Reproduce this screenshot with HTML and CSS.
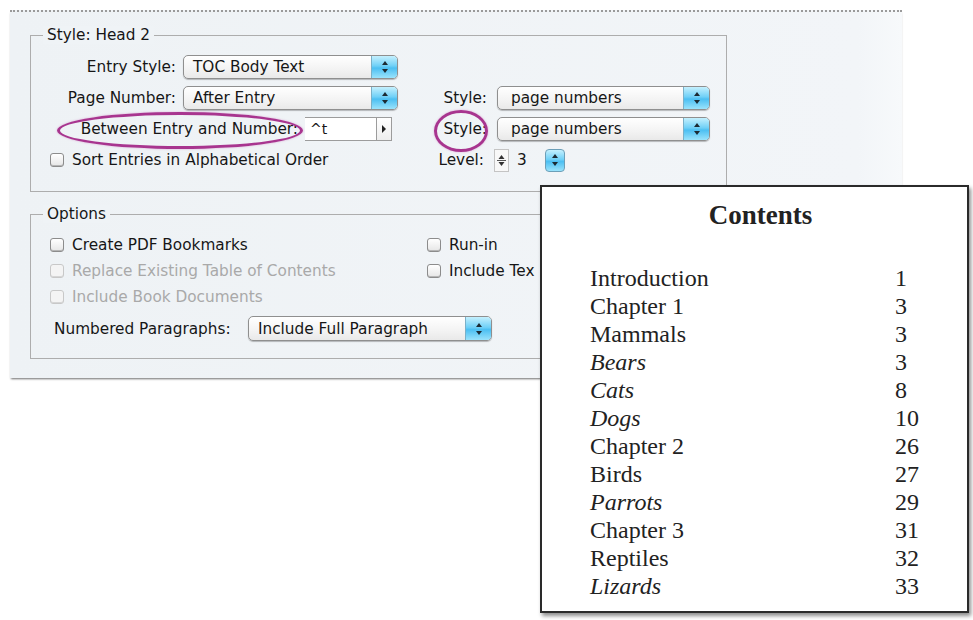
FILE: index.html
```html
<!DOCTYPE html>
<html>
<head>
<meta charset="utf-8">
<title>Table of Contents</title>
<link rel="stylesheet" href="styles.css">
</head>
<body>
<div class="page">
  <div class="dialog">
    <div class="group g1">
      <div class="legend">Style: Head 2</div>
      <div class="g1-body">
        <div class="col-left">
          <div class="row">
            <span class="lbl w145">Entry Style:</span>
            <div class="popup w215"><span class="ptxt">TOC Body Text</span><span class="stepper"><svg width="8" height="14" viewBox="0 0 8 14"><path d="M4 1 L7 5 L1 5 Z M4 13 L7 9 L1 9 Z" fill="#1c2a33"/></svg></span></div>
          </div>
          <div class="row">
            <span class="lbl w145">Page Number:</span>
            <div class="popup w215"><span class="ptxt">After Entry</span><span class="stepper"><svg width="8" height="14" viewBox="0 0 8 14"><path d="M4 1 L7 5 L1 5 Z M4 13 L7 9 L1 9 Z" fill="#1c2a33"/></svg></span></div>
          </div>
          <div class="row">
            <span class="lbl w267">Between Entry and Number:</span>
            <div class="field"><span class="ftxt">^t</span><span class="fbtn"><svg width="6" height="8" viewBox="0 0 6 8"><path d="M1 0 L5 4 L1 8 Z" fill="#222"/></svg></span></div>
          </div>
          <div class="row">
            <span class="check first"></span><span class="ctext">Sort Entries in Alphabetical Order</span>
          </div>
        </div>
        <div class="col-right">
          <div class="row">
            <span class="lbl w87">Style:</span>
            <div class="popup w213"><span class="ptxt wide">page numbers</span><span class="stepper"><svg width="8" height="14" viewBox="0 0 8 14"><path d="M4 1 L7 5 L1 5 Z M4 13 L7 9 L1 9 Z" fill="#1c2a33"/></svg></span></div>
          </div>
          <div class="row">
            <span class="lbl w87">Style:</span>
            <div class="popup w213"><span class="ptxt wide">page numbers</span><span class="stepper"><svg width="8" height="14" viewBox="0 0 8 14"><path d="M4 1 L7 5 L1 5 Z M4 13 L7 9 L1 9 Z" fill="#1c2a33"/></svg></span></div>
          </div>
          <div class="row">
            <span class="lbl w84">Level:</span>
            <span class="spin"><svg width="13" height="21" viewBox="0 0 13 21"><path d="M6.5 5 L9.5 9 L3.5 9 Z M6.5 16 L9.5 12 L3.5 12 Z" fill="#333"/><path d="M2 10.5 H11" stroke="#555" stroke-width="1"/></svg></span>
            <span class="lvl">3</span>
            <span class="bluebtn"><svg width="8" height="14" viewBox="0 0 8 14"><path d="M4 1 L7 5 L1 5 Z M4 13 L7 9 L1 9 Z" fill="#1c2a33"/></svg></span>
          </div>
        </div>
      </div>
    </div>

    <div class="group g2">
      <div class="legend">Options</div>
      <div class="opts">
        <div class="opt"><span class="check"></span><span class="ctext">Create PDF Bookmarks</span></div>
        <div class="opt clip"><span class="check"></span><span class="ctext">Run-in</span></div>
        <div class="opt dis"><span class="check"></span><span class="ctext">Replace Existing Table of Contents</span></div>
        <div class="opt clip"><span class="check"></span><span class="ctext">Include Tex</span></div>
        <div class="opt dis"><span class="check"></span><span class="ctext">Include Book Documents</span></div>
      </div>
      <div class="numrow">
        <span class="lbl w183 left">Numbered Paragraphs:</span>
        <div class="popup w244"><span class="ptxt">Include Full Paragraph</span><span class="stepper"><svg width="8" height="14" viewBox="0 0 8 14"><path d="M4 1 L7 5 L1 5 Z M4 13 L7 9 L1 9 Z" fill="#1c2a33"/></svg></span></div>
      </div>
    </div>
  </div>

  <span class="ring ring1"></span>
  <span class="ring ring2"></span>

  <div class="contents">
    <div class="ctitle">Contents</div>
    <div class="toc">
      <span>Introduction</span><span>1</span>
      <span>Chapter 1</span><span>3</span>
      <span>Mammals</span><span>3</span>
      <span class="it">Bears</span><span>3</span>
      <span class="it">Cats</span><span>8</span>
      <span class="it">Dogs</span><span>10</span>
      <span>Chapter 2</span><span>26</span>
      <span>Birds</span><span>27</span>
      <span class="it">Parrots</span><span>29</span>
      <span>Chapter 3</span><span>31</span>
      <span>Reptiles</span><span>32</span>
      <span class="it">Lizards</span><span>33</span>
    </div>
  </div>
</div>
</body>
</html>
```

FILE: styles.css
```css
* { box-sizing: border-box; }
html, body { margin: 0; padding: 0; background: #ffffff; }
.page {
  position: relative;
  width: 973px;
  height: 620px;
  padding-top: 10px;
  overflow: hidden;
  font-family: "DejaVu Sans", "Liberation Sans", sans-serif;
  font-size: 15.3px;
  color: #161616;
}
.dialog {
  margin-left: 10px;
  width: 892px;
  height: 368px;
  border-top: 2px dotted #9a9a9a;
  background: linear-gradient(90deg, #eef2f5 0%, #f2f5f8 95%, #f7f9fb 100%);
  box-shadow: 0 2px 2px -1px rgba(60,60,60,0.75);
  padding-top: 23px;
}
.group {
  margin-left: 20px;
  width: 697px;
  border: 1px solid #adadad;
}
.legend {
  width: fit-content;
  margin: -10px 0 0 12px;
  padding: 0 4px;
  line-height: 18px;
  height: 18px;
  background: #eff3f6;
}
.g1-body {
  display: flex;
  margin-top: 11px;
  padding-bottom: 19px;
}
.col-left { width: 369px; display: flex; flex-direction: column; gap: 7px; }
.col-right { display: flex; flex-direction: column; gap: 7px; margin-top: 31px; }
.row { display: flex; align-items: center; height: 24px; }
.lbl { text-align: right; white-space: nowrap; }
.lbl.left { text-align: left; }
.w145 { width: 145px; margin-right: 7px; }
.w267 { width: 267px; margin-right: 7px; }
.w87 { width: 87px; margin-right: 10px; }
.w84 { width: 84px; margin-right: 10px; }
.w183 { width: 183px; margin-right: 11px; }
.popup {
  height: 24px;
  display: flex;
  align-items: center;
  justify-content: space-between;
  border: 1px solid #8f8f8f;
  border-radius: 5px;
  background: linear-gradient(#ffffff, #f3f3f3 60%, #e9e9e9);
  box-shadow: 0 1px 1px rgba(0,0,0,0.25);
  overflow: hidden;
}
.w215 { width: 215px; }
.w213 { width: 213px; }
.w244 { width: 244px; height: 25px; }
.ptxt { padding-left: 9px; white-space: nowrap; }
.ptxt.wide { padding-left: 13px; }
.stepper, .bluebtn {
  width: 26px;
  height: 100%;
  display: flex;
  align-items: center;
  justify-content: center;
  background: linear-gradient(#c4f0fe, #6fd0f7 45%, #4cbff2 55%, #9ae3fc);
  border-left: 1px solid #7ab0c8;
}
.bluebtn {
  width: 20px;
  height: 23px;
  border: 1px solid #6c9fb8;
  border-radius: 4px;
  margin-left: 19px;
}
.field {
  width: 87px;
  height: 24px;
  display: flex;
  align-items: center;
  justify-content: space-between;
  background: #fff;
  border: 1px solid #9c9c9c;
  border-left: none;
}
.ftxt { padding-left: 5px; font-size: 14px; }
.fbtn {
  width: 15px;
  height: 100%;
  display: flex;
  align-items: center;
  justify-content: center;
  border-left: 1px solid #9c9c9c;
  background: linear-gradient(#fff, #eee);
}
.check {
  display: inline-block;
  width: 14px;
  height: 14px;
  border: 1px solid #8c8c8c;
  border-radius: 3px;
  background: linear-gradient(#ffffff, #e6e6e6);
  box-shadow: inset 0 -1px 0 #b5b5b5;
  margin-right: 8px;
  flex: none;
}
.check.first { margin-left: 19px; }
.ctext { white-space: nowrap; }
.spin {
  width: 15px;
  height: 23px;
  border: 1px solid #c4c4c4;
  background: #f8f8f8;
  display: flex;
  align-items: center;
  justify-content: center;
}
.lvl { margin-left: 8px; width: 9px; }

.g2 { margin-top: 22px; padding-bottom: 17px; }
.opts {
  display: grid;
  grid-template-columns: 377px 112px;
  row-gap: 8px;
  margin-top: 13px;
  padding-left: 19px;
}
.opt { display: flex; align-items: center; height: 18px; }
.opt.clip { overflow: hidden; }
.opt.dis { color: #a9a9a9; }
.opt.dis .check { border-color: #c8c8c8; box-shadow: inset 0 -1px 0 #d6d6d6; background: #f4f4f4; }
.numrow {
  display: flex;
  align-items: center;
  margin-top: 10px;
  padding-left: 23px;
  height: 25px;
}

.ring {
  position: absolute;
  border: 3px solid #a8358f;
  border-radius: 50%;
  box-shadow: 0 0 2px rgba(200,80,180,0.5);
}
.ring1 { left: 57px; top: 112px; width: 246px; height: 37px; }
.ring2 { left: 434px; top: 110px; width: 54px; height: 42px; }

.contents {
  position: absolute;
  left: 540px;
  top: 185px;
  width: 429px;
  height: 428px;
  border: 2px solid #2a2a2a;
  background: #fff;
  box-shadow: 2px 3px 4px rgba(0,0,0,0.45);
  font-family: "Liberation Serif", "DejaVu Serif", serif;
  color: #222;
  padding-top: 12px;
}
.ctitle {
  text-align: center;
  padding-left: 12px;
  font-weight: bold;
  font-size: 27px;
  line-height: 32px;
}
.toc {
  display: grid;
  grid-template-columns: 305px auto;
  margin-top: 33px;
  padding-left: 48px;
  font-size: 24px;
  line-height: 28px;
}
.it { font-style: italic; }
```
